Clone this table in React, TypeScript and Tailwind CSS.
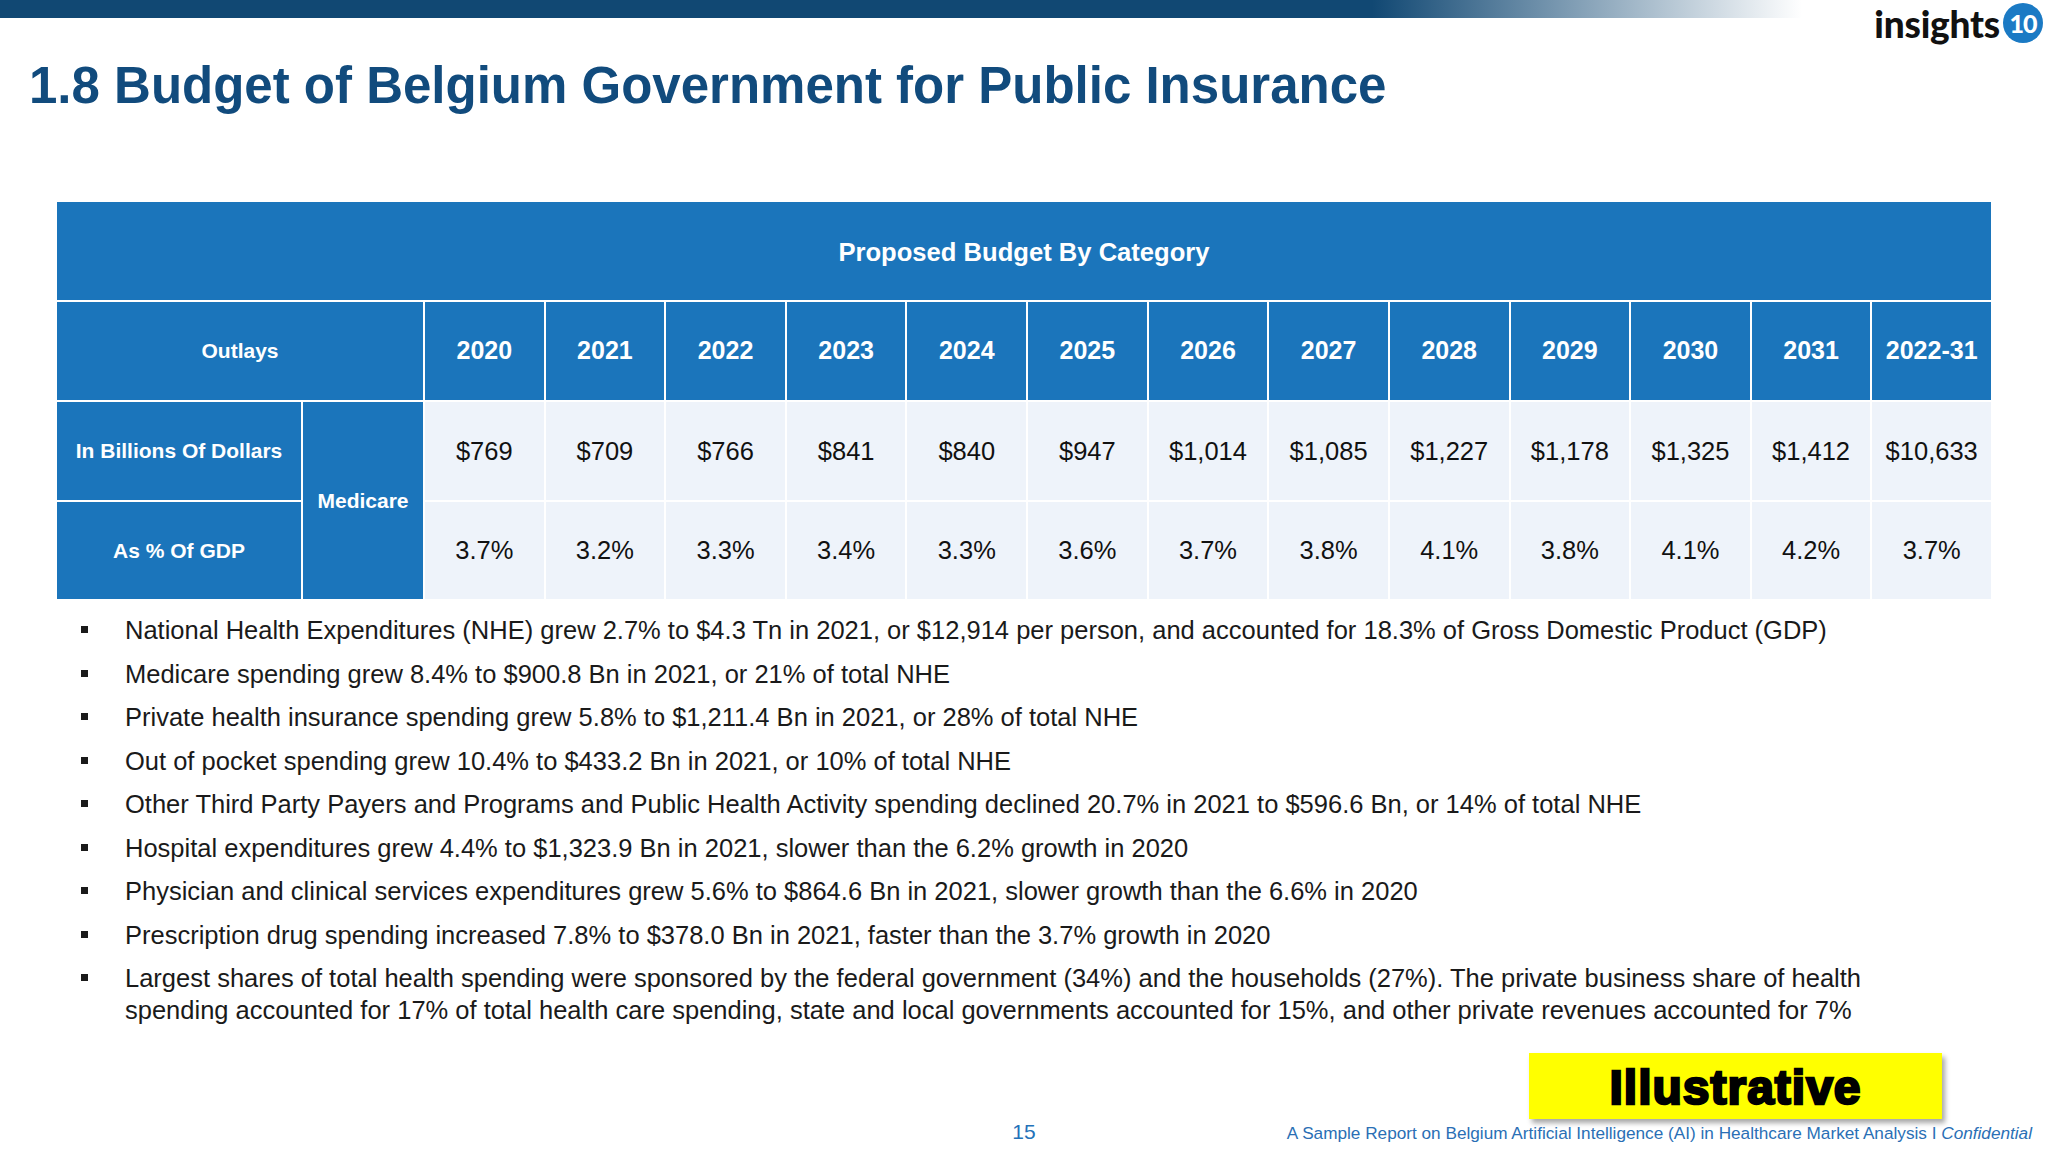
import React from 'react'

const years = ['2020', '2021', '2022', '2023', '2024', '2025', '2026', '2027', '2028', '2029', '2030', '2031', '2022-31']
const dollars = ['$769', '$709', '$766', '$841', '$840', '$947', '$1,014', '$1,085', '$1,227', '$1,178', '$1,325', '$1,412', '$10,633']
const gdp = ['3.7%', '3.2%', '3.3%', '3.4%', '3.3%', '3.6%', '3.7%', '3.8%', '4.1%', '3.8%', '4.1%', '4.2%', '3.7%']

const bullets = [
  'National Health Expenditures (NHE) grew 2.7% to $4.3 Tn in 2021, or $12,914 per person, and accounted for 18.3% of Gross Domestic Product (GDP)',
  'Medicare spending grew 8.4% to $900.8 Bn in 2021, or 21% of total NHE',
  'Private health insurance spending grew 5.8% to $1,211.4 Bn in 2021, or 28% of total NHE',
  'Out of pocket spending grew 10.4% to $433.2 Bn in 2021, or 10% of total NHE',
  'Other Third Party Payers and Programs and Public Health Activity spending declined 20.7% in 2021 to $596.6 Bn, or 14% of total NHE',
  'Hospital expenditures grew 4.4% to $1,323.9 Bn in 2021, slower than the 6.2% growth in 2020',
  'Physician and clinical services expenditures grew 5.6% to $864.6 Bn in 2021, slower growth than the 6.6% in 2020',
  'Prescription drug spending increased 7.8% to $378.0 Bn in 2021, faster than the 3.7% growth in 2020',
  'Largest shares of total health spending were sponsored by the federal government (34%) and the households (27%). The private business share of health spending accounted for 17% of total health care spending, state and local governments accounted for 15%, and other private revenues accounted for 7%',
]

function Logo() {
  return (
    <div className="absolute right-[5px] top-[3px] flex items-center gap-[3px]">
      <span className="font-['Lato',sans-serif] text-[37px] font-black leading-none tracking-[-0.2px] text-[#111]">insights</span>
      <span className="flex h-[40px] w-[40px] items-center justify-center rounded-full bg-[#1b7ac4] font-['Lato',sans-serif] text-[25px] font-black leading-none tracking-[-1px] text-white">
        10
      </span>
    </div>
  )
}

export default function App() {
  return (
    <div className="relative flex h-[1152px] w-[2048px] flex-col overflow-hidden bg-white font-['Liberation_Sans',Arial,sans-serif]">
      <div className="h-[18px] w-full bg-[linear-gradient(to_right,#114873_0%,#114873_67%,#ffffff_88%)]" />
      <Logo />

      <h1 className="ml-[29px] mt-[43px] text-[51px] font-bold leading-[50px] text-[#114b7d]">
        1.8 Budget of Belgium Government for Public Insurance
      </h1>

      <div className="ml-[57px] mt-[91px] grid w-[1934px] grid-cols-[244px_120px_repeat(13,minmax(0,1fr))] grid-rows-[98px_98px_98px_97px] gap-[2px] bg-white">
        <div className="col-span-15 flex items-center justify-center pt-[3px] bg-[#1b75bb] text-[25.6px] font-bold text-white">
          Proposed Budget By Category
        </div>

        <div className="col-span-2 flex items-center justify-center bg-[#1b75bb] text-[21px] font-bold text-white">Outlays</div>
        {years.map((y) => (
          <div key={y} className="flex items-center justify-center bg-[#1b75bb] text-[25px] font-bold text-white">
            {y}
          </div>
        ))}

        <div className="flex items-center justify-center bg-[#1b75bb] text-[21px] font-bold text-white">In Billions Of Dollars</div>
        <div className="row-span-2 flex items-center justify-center bg-[#1b75bb] text-[21px] font-bold text-white">Medicare</div>
        {dollars.map((d) => (
          <div key={d} className="flex items-center justify-center bg-[#eef3fa] text-[25.5px] text-[#111]">
            {d}
          </div>
        ))}

        <div className="flex items-center justify-center bg-[#1b75bb] text-[21px] font-bold text-white">As % Of GDP</div>
        {gdp.map((g, i) => (
          <div key={i} className="flex items-center justify-center bg-[#eef3fa] text-[25.5px] text-[#111]">
            {g}
          </div>
        ))}
      </div>

      <ul className="ml-[81px] mt-[15px] flex w-[1800px] flex-col gap-[11.5px]">
        {bullets.map((b, i) => (
          <li key={i} className="flex text-[25.5px] leading-[32px] text-[#1a1a1a]">
            <span className="mt-[12px] h-[7px] w-[7px] shrink-0 bg-[#1a1a1a]" />
            <span className="ml-[37px]">{b}</span>
          </li>
        ))}
      </ul>

      <div className="mt-auto flex flex-col">
        <div className="mr-[106px] flex justify-end">
          <div className="flex h-[66px] w-[413px] items-center justify-center pt-[4px] bg-[#ffff00] shadow-[3px_4px_5px_rgba(0,0,0,0.35)]">
            <span className="text-[48px] font-black leading-none tracking-[1px] text-black [-webkit-text-stroke:2.5px_black]">Illustrative</span>
          </div>
        </div>
        <div className="mb-[9px] grid h-[24px] grid-cols-[minmax(0,1fr)_auto_minmax(0,1fr)] items-center">
          <div />
          <div className="text-[21px] leading-none text-[#2372b9]">15</div>
          <div className="mt-[6px] justify-self-end whitespace-nowrap pr-[16px] text-[17.2px] leading-none text-[#2a6fb5]">
            A Sample Report on Belgium Artificial Intelligence (AI) in Healthcare Market Analysis I <span className="italic">Confidential</span>
          </div>
        </div>
      </div>
    </div>
  )
}
